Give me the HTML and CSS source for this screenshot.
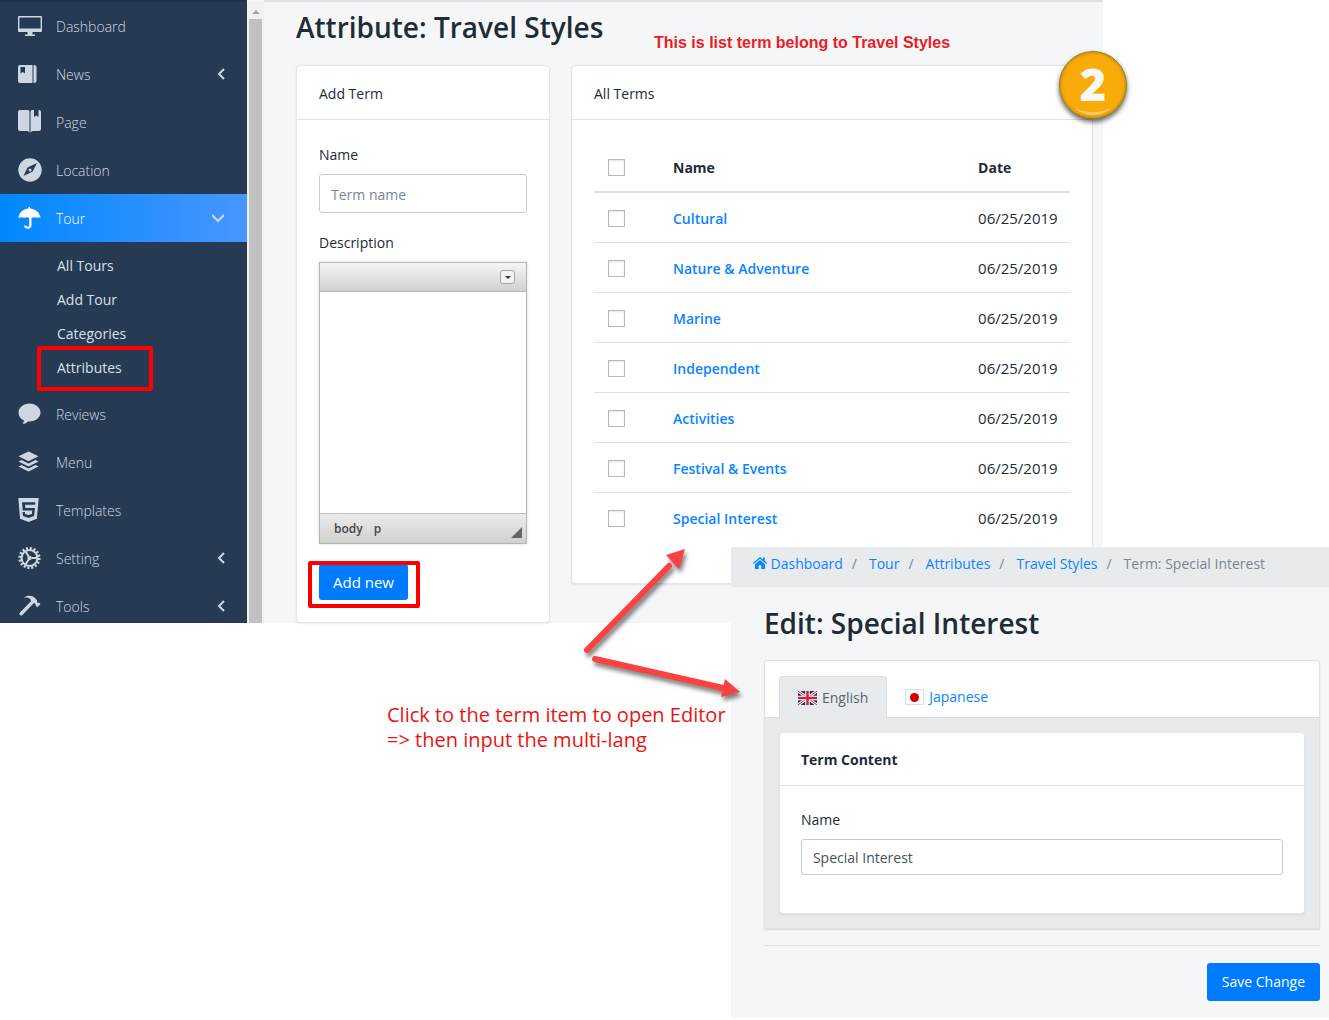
FILE: index.html
```html
<!DOCTYPE html>
<html lang="en">
<head>
<meta charset="utf-8">
<title>Attribute: Travel Styles</title>
<link rel="stylesheet" href="styles.css">
</head>
<body>
<div class="canvas">
  <div class="admin">
    <nav class="sidebar" aria-label="Main menu">
      <a class="item" href="#"><svg class="icon" viewBox="0 0 24 24"><path fill-rule="evenodd" d="M1 2h22a1 1 0 0 1 1 1v14a1 1 0 0 1-1 1H1a1 1 0 0 1-1-1V3a1 1 0 0 1 1-1zm.4 1.4v11.2h21.2V3.400z"/><path d="M9.500 18h5v2.500H17V22H7v-1.500h2.500z"/></svg><span>Dashboard</span></a>
      <a class="item" href="#"><svg class="icon" viewBox="0 0 24 24"><path fill-rule="evenodd" d="M2 3h12.500v18H2a2 2 0 0 1-2-2V5a2 2 0 0 1 2-2zm.5 2v6.500L4.800 10l2.200 1.500V5z"/><path d="M15.500 3c2 0 3 .8 3 2.500v13c0 1.700-1 2.500-3 2.500z"/></svg><span>News</span><svg class="chevron" viewBox="0 0 12 12"><path d="M9 1 4 6l5 5"/></svg></a>
      <a class="item" href="#"><svg class="icon" viewBox="0 0 24 24"><path d="M2 0h7.500c1.300 0 2 .7 2 2v20.500L9.500 21H2a2 2 0 0 1-2-2V2a2 2 0 0 1 2-2z"/><path d="M12.500 22.500V2c0-1.300.7-2 2-2H16v7l2.200-1.500L20.500 7V0h.5a2 2 0 0 1 2 2v17a2 2 0 0 1-2 2h-6.500z"/></svg><span>Page</span></a>
      <a class="item" href="#"><svg class="icon" viewBox="0 0 24 24"><path fill-rule="evenodd" d="M12 .3a11.700 11.700 0 1 1 0 23.400A11.700 11.700 0 0 1 12 .3zM19 5l-9.500 4.500L5.500 18l9.200-4.500zM12 10.400a1.500 1.500 0 1 1 0 3 1.500 1.500 0 0 1 0-3z"/></svg><span>Location</span></a>
      <a class="item active" href="#"><svg class="icon" viewBox="0 0 24 24"><path d="M10.500 2.500V1h1.500v1.500c5.500.4 10 4.300 10.500 9.500-1-1-2.800-1.200-4-.2-1.300-.9-3.700-.9-5 .2V19c0 5-7 5-7.500.5h2.200c.5 1.800 3 1.600 3-.5v-7c-1.300-1.100-3.500-1.100-5-.2-1.500-1-4-.8-5.700.2C1 6.800 5 2.900 10.500 2.500z"/></svg><span>Tour</span><svg class="chevron down" viewBox="0 0 12 12"><path d="m0 3 6 6 6-6"/></svg></a>
      <div class="submenu">
        <a href="#">All Tours</a>
        <a href="#">Add Tour</a>
        <a href="#">Categories</a>
        <a class="marked" href="#">Attributes</a>
      </div>
      <a class="item" href="#"><svg class="icon" viewBox="0 0 24 24"><path d="M11.500 1.500c6 0 11 4 11 9s-5 9-11 9l-1.500-.1c-1.500 1.500-3 2.300-5.500 2.600.8-1 1.400-2.200 1.200-3.700C2.500 16.800.5 14 .5 10.500c0-5 5-9 11-9z"/></svg><span>Reviews</span></a>
      <a class="item" href="#"><svg class="icon" viewBox="0 0 24 24"><path d="m10.500 1.500 10 4.800-10 4.900L.5 6.300z"/><path d="m.5 11.500 3-1.500 7 3.500 7-3.500 3 1.500-10 5z"/><path d="m.5 16.500 3-1.500 7 3.400 7-3.400 3 1.500-10 5z"/></svg><span>Menu</span></a>
      <a class="item" href="#"><svg class="icon" viewBox="0 0 24 24"><path fill-rule="evenodd" d="M.3 0h20.400l-1.800 20.800L10.500 24l-8.400-3.200zM4 4.200l.7 8.300h9.500l-.3 3.600-3.400 1-3.400-1-.2-2H4.600l.3 4 5.600 1.800 5.600-1.800.8-8.100H7.300L7 6.800h10.100l.3-2.600z"/></svg><span>Templates</span></a>
      <a class="item" href="#"><svg class="icon line" viewBox="0 0 24 24"><circle class="teeth" cx="11.500" cy="12" r="9.600"/><circle cx="11.500" cy="12" r="7.900"/><path d="M13.500 12H19M10.500 10.200 7.600 5.500M10.500 13.800l-2.900 4.700"/><circle cx="11.500" cy="12" r="1.200"/></svg><span>Setting</span><svg class="chevron" viewBox="0 0 12 12"><path d="M9 1 4 6l5 5"/></svg></a>
      <a class="item" href="#"><svg class="icon" viewBox="0 0 24 24"><path d="M5.800 3.800C9.500 1 14 1.300 17 4l2 2.300c.2.800.2 1.500.1 2l.9.800 1-.6 1.500 1.700-3.400 3-1.600-1.700.3-1-1.200-1.200-1.200.1L4.200 21.300c-1 1-3.600-1-2.700-2.400L13 7.200c0-2.300-2.500-4.300-7.200-3.400z"/></svg><span>Tools</span><svg class="chevron" viewBox="0 0 12 12"><path d="M9 1 4 6l5 5"/></svg></a>
    </nav>
    <div class="scrollbar" aria-hidden="true"><i class="scroll-up"></i><i class="thumb"></i></div>
    <main class="content">
      <h1>Attribute: Travel Styles</h1>
      <div class="columns">
        <section class="card">
          <header class="card-head">Add Term</header>
          <form class="card-body term-form">
            <label for="term">Name</label>
            <input class="field" id="term" type="text" placeholder="Term name">
            <label for="desc">Description</label>
            <div class="editor">
              <div class="toolbar"><button type="button" class="collapse" aria-label="Collapse toolbar"></button></div>
              <textarea id="desc"></textarea>
              <div class="statusbar"><span>body</span><span>p</span><i class="grip"></i></div>
            </div>
            <button class="btn add" type="button">Add new</button>
          </form>
        </section>
        <section class="card terms">
          <header class="card-head">All Terms</header>
          <div class="card-body">
            <table>
              <thead><tr><th class="check"><input type="checkbox" aria-label="Select all"></th><th>Name</th><th class="date">Date</th></tr></thead>
              <tbody>
                <tr><td class="check"><input type="checkbox" aria-label="Cultural"></td><td><a href="#">Cultural</a></td><td>06/25/2019</td></tr>
                <tr><td class="check"><input type="checkbox" aria-label="Nature &amp; Adventure"></td><td><a href="#">Nature &amp; Adventure</a></td><td>06/25/2019</td></tr>
                <tr><td class="check"><input type="checkbox" aria-label="Marine"></td><td><a href="#">Marine</a></td><td>06/25/2019</td></tr>
                <tr><td class="check"><input type="checkbox" aria-label="Independent"></td><td><a href="#">Independent</a></td><td>06/25/2019</td></tr>
                <tr><td class="check"><input type="checkbox" aria-label="Activities"></td><td><a href="#">Activities</a></td><td>06/25/2019</td></tr>
                <tr><td class="check"><input type="checkbox" aria-label="Festival &amp; Events"></td><td><a href="#">Festival &amp; Events</a></td><td>06/25/2019</td></tr>
                <tr><td class="check"><input type="checkbox" aria-label="Special Interest"></td><td><a href="#">Special Interest</a></td><td>06/25/2019</td></tr>
              </tbody>
            </table>
          </div>
        </section>
      </div>
    </main>
  </div>

  <p class="note note-list">This is list term belong to Travel Styles</p>
  <p class="note note-click">Click to the term item to open Editor<br>=&gt; then input the multi-lang</p>
  <div class="badge">2<svg viewBox="0 0 36 8"><path d="M0 0c10 5.500 26 5.500 36 0-8 9.500-28 9.500-36 0z"/></svg></div>

  <div class="edit">
    <nav class="crumbs" aria-label="Breadcrumb">
      <a href="#"><svg viewBox="0 0 14 12"><path d="M7 0 0 6l.8 1L7 1.800 13.200 7l.8-1-2.200-1.900V.6H10v2z"/><path d="M7 3 2 7.200V12h3.700V8.300h2.600V12H12V7.200z"/></svg> Dashboard</a><span>/</span><a href="#">Tour</a><span>/</span><a href="#">Attributes</a><span>/</span><a href="#">Travel Styles</a><span>/</span><em>Term: Special Interest</em>
    </nav>
    <div class="edit-body">
      <h2>Edit: Special Interest</h2>
      <div class="panel">
        <div class="tabs">
          <a class="tab selected" href="#"><svg viewBox="0 0 38 28"><path fill="#1f2f72" d="M0 0h38v28H0z"/><path stroke="#fff" stroke-width="6" d="m0 0 38 28M38 0 0 28"/><path stroke="#d0203a" stroke-width="2" d="m0 0 38 28M38 0 0 28"/><path stroke="#fff" stroke-width="9" d="M19 0v28M0 14h38"/><path stroke="#d0203a" stroke-width="5" d="M19 0v28M0 14h38"/></svg>English</a>
          <a class="tab" href="#"><svg viewBox="0 0 38 32"><path fill="#fff" stroke="#ddd" stroke-width="2" d="M1 1h36v30H1z"/><circle cx="19" cy="17" r="9" fill="#d40000"/></svg>Japanese</a>
        </div>
        <div class="panel-body">
          <section class="card">
            <header class="card-head strong">Term Content</header>
            <div class="card-body">
              <label for="name">Name</label>
              <input class="field small" id="name" type="text" value="Special Interest">
            </div>
          </section>
        </div>
      </div>
      <div class="actions"><button class="btn" type="button">Save Change</button></div>
    </div>
  </div>

  <svg class="arrows" viewBox="0 0 170 160" aria-hidden="true">
    <g><path class="shaft" d="m12 107 82-84"/><path d="m110 6-19 6 13 14z"/></g>
    <g><path class="shaft" d="m20 116 128 29"/><path d="m165 149-15-13-4 18z"/></g>
  </svg>
</div>
</body>
</html>
```
FILE: styles.css
```css
*, *::before, *::after { box-sizing: border-box; }
body {
  margin: 0;
  background: #fff;
  color: #212b36;
  font: 14px/24px "Open Sans", "Noto Sans", sans-serif;
}
a { color: #0a84ff; text-decoration: none; }
h1, h2, p { margin: 0; }
button, input, textarea { font: inherit; }

.canvas { position: relative; min-height: 100vh; }

/* list screen */
.admin {
  display: grid;
  grid-template-columns: 247px 17px 1fr;
  width: 83%;
  background: #f4f6f8;
}
.sidebar { background: #273a53; border-top: 2px solid #20304a; }
.item {
  display: flex;
  align-items: center;
  padding: 11px 20px 11px 18px;
  color: #ccd7e3;
  font-weight: 300;
}
.item:last-child { padding-bottom: 4px; }
.item.active {
  background: linear-gradient(90deg, #0088ff, #4896ff);
  color: #fff;
}
.item span { flex: 1; margin-left: 14px; padding-top: 2px; }
.icon { width: 24px; height: 24px; fill: currentColor; }
.icon.line { fill: none; stroke: currentColor; stroke-width: 2; }
.icon .teeth { stroke-width: 3; stroke-dasharray: 2 1.770; }
.chevron { width: 12px; height: 12px; fill: none; stroke: #ccd7e3; stroke-width: 2; }
.chevron.down { margin-right: 3px; }
.submenu { padding: 7px 0 5px; }
.submenu a {
  display: block;
  padding: 5px 0 5px 57px;
  color: #d6e0ea;
}
.marked { position: relative; }
.marked::after, .add::after {
  content: "";
  position: absolute;
  border: 4px solid #f00;
  border-radius: 2px;
}
.marked::after { left: 37px; top: -5px; width: 116px; height: 45px; }

.scrollbar {
  display: flex;
  flex-direction: column;
  align-items: center;
  gap: 5px;
  margin-top: 2px;
  padding-top: 8px;
  background: #f1f1f1;
}
.scroll-up { border: 4px solid transparent; border-top: 0; border-bottom-color: #a3a3a3; }
.thumb { flex: 1; width: 13px; background: #c1c1c1; }

.content { padding: 0 10px 0 32px; border-top: 2px solid #dfe3e8; }
h1 { padding: 5px 0 18px; }
h1, h2 { font-size: 28px; line-height: 40px; font-weight: 600; }
.columns {
  display: grid;
  grid-template-columns: 254px 1fr;
  gap: 21px;
  align-items: start;
}
.card {
  background: #fff;
  border: 1px solid #e2e5e9;
  border-radius: 4px;
  box-shadow: 0 1px 2px rgba(0, 0, 0, .08);
}
.terms { padding-bottom: 19px; }
.card-head { padding: 16px 22px 13px; border-bottom: 1px solid #dfe3e8; }
.card-body { display: flex; flex-direction: column; padding: 22px; }
.term-form { padding-top: 23px; }
label { margin-bottom: 7px; }
.field {
  width: 100%;
  height: 39px;
  margin-bottom: 18px;
  padding: 1px 11px 0;
  border: 1px solid #c4cdd5;
  border-radius: 3px;
  background: #fff;
  color: #495057;
}
.field::placeholder { color: #7b858f; opacity: 1; }
.field.small { height: 36px; padding-top: 0; }

.editor { border: 1px solid #b6b6b6; box-shadow: 0 0 3px rgba(0, 0, 0, .15); }
.toolbar {
  display: flex;
  justify-content: flex-end;
  padding: 7px 11px 7px;
  border-bottom: 1px solid #b6b6b6;
  background: linear-gradient(#f5f5f5, #cfd1cf);
}
.collapse {
  display: grid;
  place-items: center;
  width: 15px;
  height: 14px;
  padding: 0;
  border: 1px solid #a6a6a6;
  border-radius: 3px;
  background: #f3f3f3;
}
.collapse::before { content: ""; border: 3px solid transparent; border-top-color: #333; border-bottom: 0; }
.editor textarea { display: block; width: 100%; height: 221px; border: 0; resize: none; outline: 0; }
.statusbar {
  display: flex;
  gap: 11px;
  padding: 3px 4px 2px 14px;
  border-top: 1px solid #bfbfbf;
  background: linear-gradient(#ebebeb, #cfd1cf);
  color: #484848;
  font-size: 12px;
  font-weight: 600;
}
.grip { align-self: end; margin-left: auto; margin-bottom: 3px; border: solid transparent; border-width: 11px 0 0 11px; border-bottom: 11px solid #666; border-top: 0; }

.btn {
  align-self: flex-start;
  padding: 7px 15px;
  border: 0;
  border-radius: 3px;
  background: #007bff;
  color: #fff;
}
.add { position: relative; height: 36px; margin-top: 20px; padding: 6px 14px; font-size: 15px; }
.add::after { left: -11px; right: -12px; top: -3px; height: 47px; }

table { width: 100%; border-collapse: collapse; table-layout: fixed; }
th, td { height: 50px; padding: 2px 0 0; text-align: left; border-bottom: 1px solid #dee2e6; }
th { border-bottom-width: 2px; font-weight: 700; }
td { font-size: 15px; }
td a { font-size: 14px; font-weight: 600; }
tbody tr:last-child td { border-bottom: 0; }
.check { width: 79px; padding-left: 14px; }
.date { width: 92px; }
input[type="checkbox"] {
  display: block;
  appearance: none;
  width: 17px;
  height: 17px;
  margin: 0;
  border: 1px solid #b4b9be;
  background: #fff;
  box-shadow: inset 0 1px 2px rgba(0, 0, 0, .1);
}

/* annotations laid over the screens */
.note { position: absolute; }
.note-list { left: 654px; top: 31px; color: #ed1c24; font: bold 16px/24px "Liberation Sans", Arial, sans-serif; }
.note-click { left: 387px; top: 702px; color: #e81414; font-size: 20px; line-height: 25px; white-space: nowrap; }
.badge {
  position: absolute;
  left: 1059px;
  top: 51px;
  width: 68px;
  height: 68px;
  border: 1px solid #8b8130;
  border-radius: 50%;
  background: #f9ab0a;
  box-shadow: inset 0 0 3px 1px #d58c00, 0 3px 5px rgba(0, 0, 0, .6);
  color: #f8f8f8;
  font-size: 45px;
  font-weight: 800;
  line-height: 64px;
  text-align: center;
}
.badge svg { position: absolute; left: 15px; bottom: 2px; width: 36px; height: 8px; fill: #fbc76a; }
.arrows {
  position: absolute;
  left: 575px;
  top: 543px;
  width: 170px;
  height: 160px;
  fill: #fb4141;
  filter: drop-shadow(2px 4px 2px rgba(0, 0, 0, .5));
}
.shaft { stroke: #fb4141; stroke-width: 6; stroke-linecap: round; }

/* edit screen, lying over the list screen */
.edit { position: absolute; left: 55%; right: 0; top: 547px; background: #f4f6f8; }
.crumbs { display: flex; padding: 5px 22px 11px; background: #e8ebee; color: #7b858f; }
.crumbs span { margin: 0 12px 0 9px; }
.crumbs em { font-style: normal; }
.crumbs svg { width: 14px; height: 12px; fill: #0a84ff; }
.edit-body { padding: 16px 9px 16px 33px; }
h2 { padding-bottom: 17px; }
.panel {
  border: 1px solid #e0e3e6;
  border-radius: 3px 3px 0 0;
  background: #fff;
  box-shadow: 0 1px 2px rgba(0, 0, 0, .12);
}
.tabs { display: flex; padding: 15px 14px 0; border-bottom: 1px solid #dadfe3; }
.tab {
  display: flex;
  align-items: center;
  gap: 5px;
  height: 41px;
  padding: 0 18px;
}
.tab svg { width: 19px; height: 16px; }
.tab.selected {
  margin-bottom: -1px;
  height: 42px;
  border: 1px solid #dadfe3;
  border-bottom: 0;
  border-radius: 4px 4px 0 0;
  background: #e8ebee;
  color: #5a636c;
}
.panel-body { padding: 14px; background: #e8ebee; }
.panel .card-head { padding: 15px 21px 13px; }
.panel .card-body { padding: 22px 21px 20px; }
.strong { font-weight: 700; }
.actions { display: flex; justify-content: flex-end; margin-top: 16px; padding-top: 17px; border-top: 1px solid #dfe2e6; }
```
